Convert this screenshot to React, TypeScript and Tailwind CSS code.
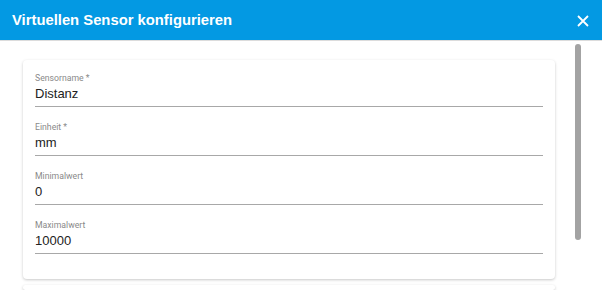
import React from "react";

const fields = [
  { label: "Sensorname *", value: "Distanz" },
  { label: "Einheit *", value: "mm" },
  { label: "Minimalwert", value: "0" },
  { label: "Maximalwert", value: "10000" },
];

export default function App() {
  return (
    <div className="w-[602px] h-[290px] overflow-hidden bg-white flex flex-col">
      <div className="h-[41px] shrink-0 bg-[#0399e3] flex items-center justify-between pl-[12px] pr-[13px] border-b border-[#dcdcdc]">
        <h1 className="text-white text-[14.8px] font-bold font-['Liberation_Sans',sans-serif]">
          Virtuellen Sensor konfigurieren
        </h1>
        <svg width="12" height="12" viewBox="0 0 12 12" className="mt-[1px]">
          <path d="M1 1L11 11M11 1L1 11" stroke="white" strokeWidth="1.8" />
        </svg>
      </div>
      <div className="flex flex-1 min-h-0">
        <div className="flex-1 pl-[23px] pt-[19px] flex flex-col gap-[6px]">
          <div className="w-[532px] bg-white rounded-[4px] shadow-[0_1px_3px_rgba(0,0,0,0.22)] px-[12px] pt-[12px] pb-[25px] flex flex-col gap-[14px] font-['Roboto',sans-serif]">
            {fields.map((f) => (
              <div key={f.label} className="flex flex-col border-b border-[#a8a8a8] pb-[2px]">
                <span className="text-[8.7px] leading-[12px] text-[#8a8a8a]">{f.label}</span>
                <span className="text-[13px] leading-[20px] text-[#222] font-['Liberation_Sans',sans-serif]">{f.value}</span>
              </div>
            ))}
          </div>
          <div className="w-[532px] h-[20px] bg-white rounded-[4px] shadow-[0_1px_3px_rgba(0,0,0,0.22)]" />
        </div>
        <div className="w-[29px] shrink-0 pt-[3px] pl-[2px]">
          <div className="w-[6px] h-[196px] rounded-full bg-[#a3a3a3]" />
        </div>
      </div>
    </div>
  );
}
